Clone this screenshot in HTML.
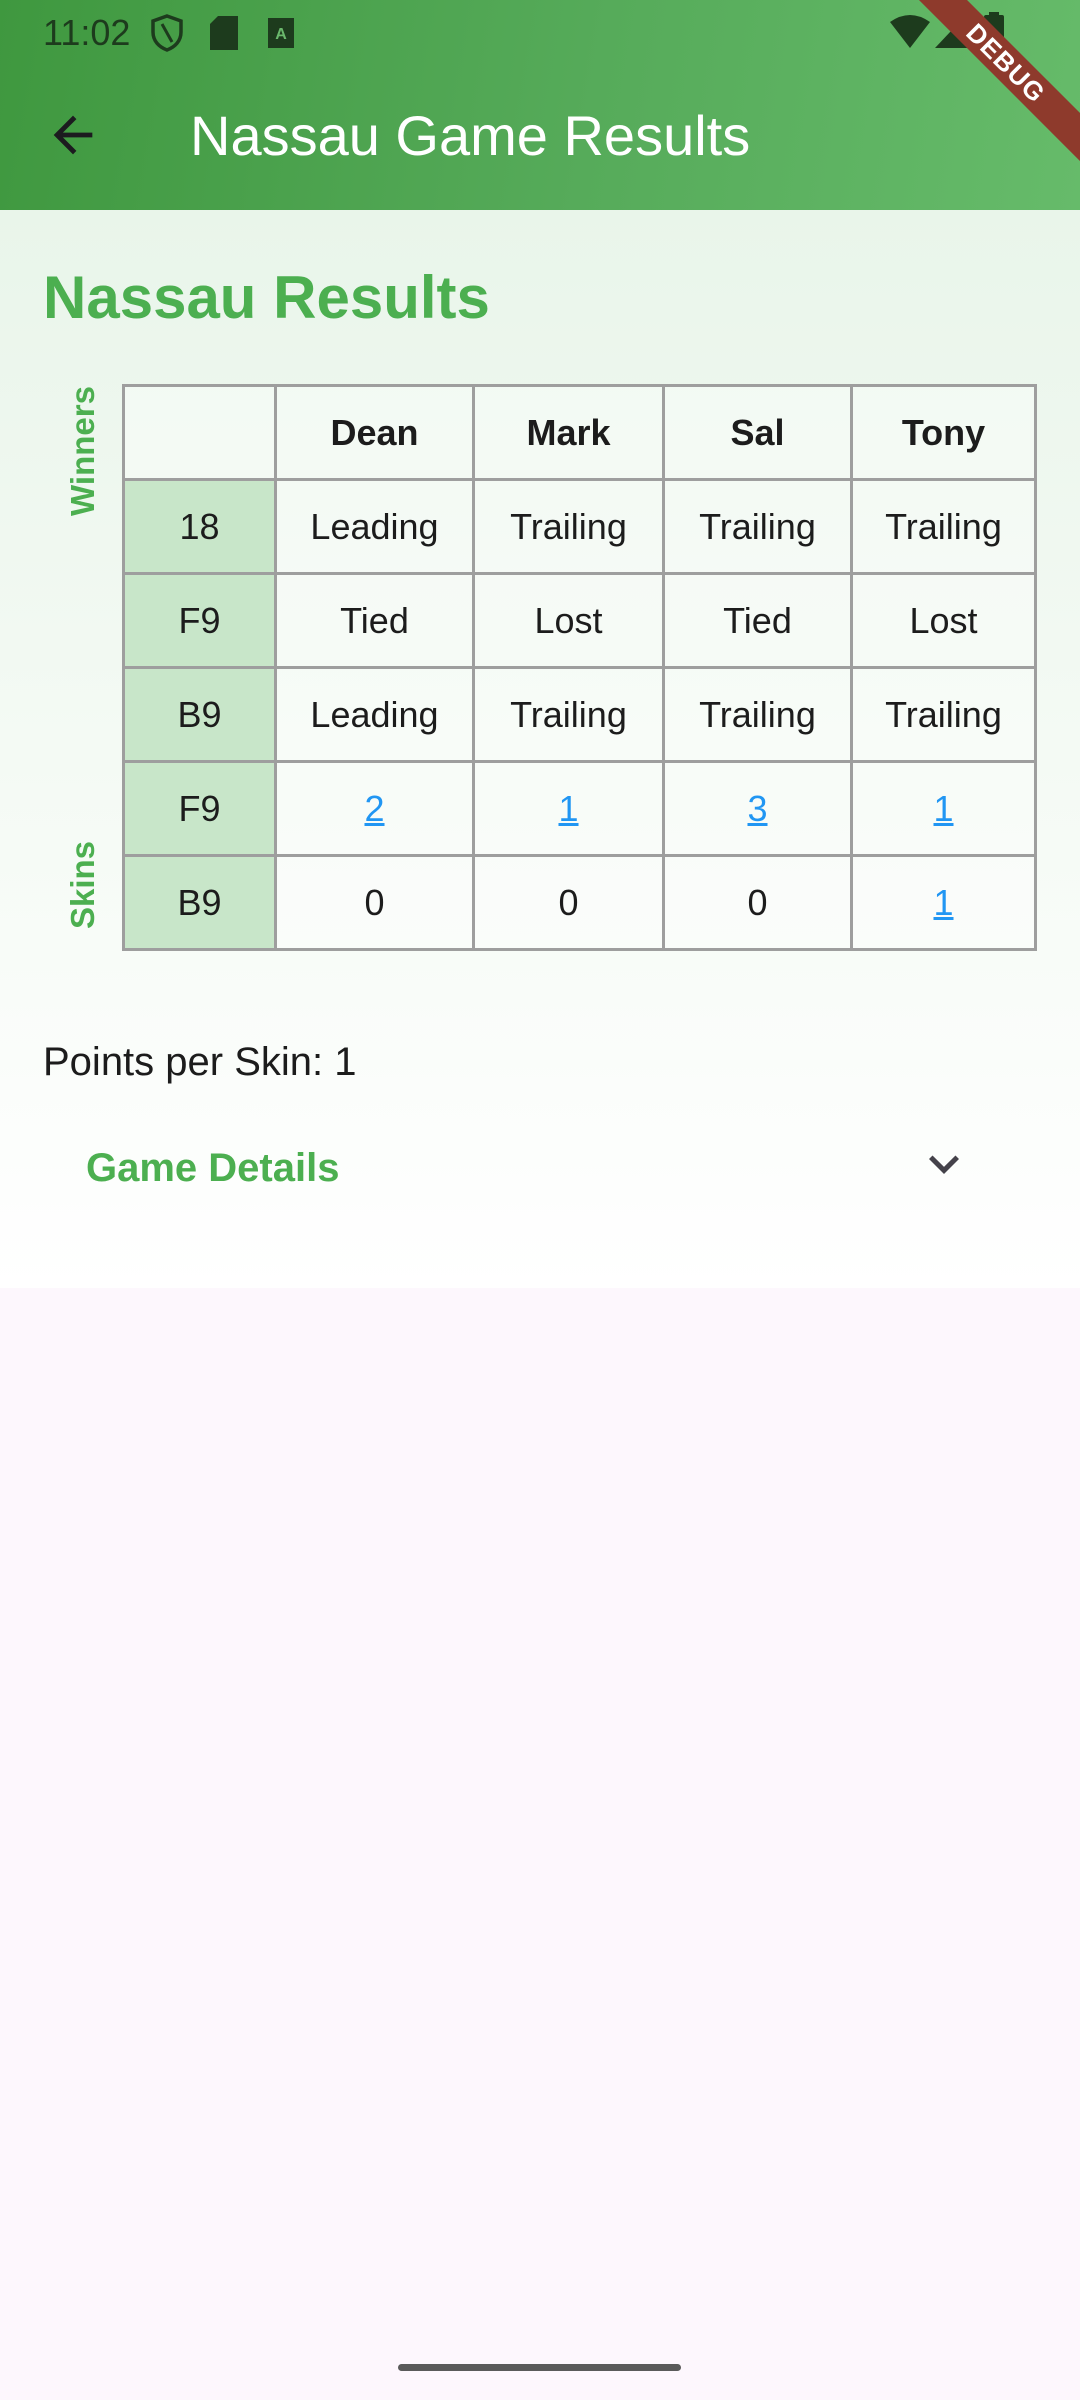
<!DOCTYPE html>
<html><head><meta charset="utf-8">
<style>
*{margin:0;padding:0;box-sizing:border-box}
html,body{width:1080px;height:2400px;overflow:hidden;background:#fdf7fd;font-family:"Liberation Sans",sans-serif}
.appbar{position:absolute;left:0;top:0;width:1080px;height:210px;background:linear-gradient(100deg,#3f983f 0%,#56ab5a 55%,#66bb6a 100%)}
.time{position:absolute;left:43px;top:12px;font-size:36px;color:#1d3b1d}
.title{position:absolute;left:190px;top:104px;font-size:56px;color:#fff;line-height:64px}
.content{position:absolute;left:0;top:210px;width:1080px;height:1078px;background:linear-gradient(180deg,#e9f5ea 0%,#f4faf4 50%,#ffffff 100%)}
.h1{position:absolute;left:43px;top:263px;font-size:60px;font-weight:bold;color:#4caf50;line-height:70px}
table{position:absolute;left:122px;top:384px;border-collapse:collapse;width:915px}
td{border:3px solid #9e9e9e;height:94px;text-align:center;font-size:36px;color:#1c1c1c;background:rgba(255,255,255,0.35)}
td.l{background:#c8e6c9;width:152px}
th{border:3px solid #9e9e9e;height:94px;font-size:36px;color:#1c1c1c;background:rgba(255,255,255,0.35)}
a{color:#2196f3;text-decoration:underline}
.vl{position:absolute;font-size:33px;font-weight:bold;color:#4caf50;transform:rotate(-90deg);transform-origin:center;white-space:nowrap}
.pps{position:absolute;left:43px;top:1040px;font-size:40px;color:#1c1c1c}
.gd{position:absolute;left:86px;top:1146px;font-size:40px;font-weight:bold;color:#4caf50}
.home{position:absolute;left:398px;top:2364px;width:283px;height:7px;border-radius:4px;background:#5a5a5a}
.ribbon{position:absolute;right:-76px;top:46px;width:300px;height:34px;background:#8e3a2c;transform:rotate(45deg);color:#fff;font-weight:bold;font-size:26px;text-align:center;line-height:34px;letter-spacing:1px}
</style></head><body>
<div class="appbar">
  <div class="time">11:02</div>
  <svg style="position:absolute;left:150px;top:14px" width="34" height="38" viewBox="0 0 34 38"><path d="M17 2 L31 7 V18 C31 27 25 33 17 36 C9 33 3 27 3 18 V7 Z" fill="none" stroke="#1d3b1d" stroke-width="3.5"/><path d="M12 10 L22 28" stroke="#1d3b1d" stroke-width="3"/></svg>
  <svg style="position:absolute;left:210px;top:16px" width="28" height="34" viewBox="0 0 28 34"><path d="M8 0 H28 V34 H0 V8 Z" fill="#1d3b1d"/></svg>
  <svg style="position:absolute;left:268px;top:18px" width="26" height="30" viewBox="0 0 26 30"><rect width="26" height="30" fill="#1d3b1d"/><text x="13" y="21" font-size="16" fill="#6ab86c" text-anchor="middle" font-family="Liberation Sans" font-weight="bold">A</text></svg>
  <svg style="position:absolute;left:890px;top:14px" width="40" height="34" viewBox="0 0 40 34"><path d="M0 8 Q20 -6 40 8 L20 34 Z" fill="#1d3b1d"/></svg>
  <svg style="position:absolute;left:935px;top:14px" width="32" height="34" viewBox="0 0 32 34"><path d="M32 0 V34 H0 Z" fill="#1d3b1d"/></svg>
  <svg style="position:absolute;left:984px;top:12px" width="20" height="36" viewBox="0 0 20 36"><rect x="5" y="0" width="10" height="4" fill="#1d3b1d"/><rect x="0" y="3" width="20" height="33" rx="2" fill="#1d3b1d"/></svg>
  <svg style="position:absolute;left:44px;top:106px" width="58" height="58" viewBox="0 0 24 24"><path d="M20 11H7.83l5.59-5.59L12 4l-8 8 8 8 1.41-1.41L7.83 13H20v-2z" fill="#1c1b1f"/></svg>
  <div class="title">Nassau Game Results</div>
  <div class="ribbon">DEBUG</div>
</div>
<div class="content"></div>
<div class="h1">Nassau Results</div>
<div class="vl" style="left:18px;top:432px;width:130px;text-align:center">Winners</div>
<div class="vl" style="left:33px;top:866px;width:100px;text-align:center">Skins</div>
<table>
<tr><th style="width:152px"></th><th style="width:198px">Dean</th><th style="width:190px">Mark</th><th style="width:188px">Sal</th><th>Tony</th></tr>
<tr><td class="l">18</td><td>Leading</td><td>Trailing</td><td>Trailing</td><td>Trailing</td></tr>
<tr><td class="l">F9</td><td>Tied</td><td>Lost</td><td>Tied</td><td>Lost</td></tr>
<tr><td class="l">B9</td><td>Leading</td><td>Trailing</td><td>Trailing</td><td>Trailing</td></tr>
<tr><td class="l">F9</td><td><a>2</a></td><td><a>1</a></td><td><a>3</a></td><td><a>1</a></td></tr>
<tr><td class="l">B9</td><td>0</td><td>0</td><td>0</td><td><a>1</a></td></tr>
</table>
<div class="pps">Points per Skin: 1</div>
<div class="gd">Game Details</div>
<svg style="position:absolute;left:914px;top:1134px" width="60" height="60" viewBox="0 0 24 24"><path d="M7.41 8.59L12 13.17l4.59-4.58L18 10l-6 6-6-6 1.41-1.41z" fill="#44424a"/></svg>
<div class="home"></div>
</body></html>
